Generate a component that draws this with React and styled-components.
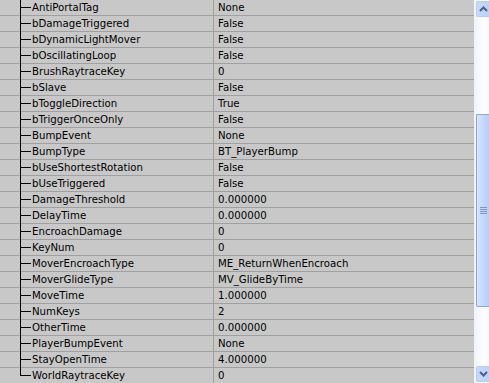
import React from 'react'
import styled, { createGlobalStyle } from 'styled-components'

const GlobalStyle = createGlobalStyle`
  html, body {
    margin: 0;
    padding: 0;
    overflow: hidden;
    background: #c8c8c8;
  }
`

const props = [
  ['AntiPortalTag', 'None'],
  ['bDamageTriggered', 'False'],
  ['bDynamicLightMover', 'False'],
  ['bOscillatingLoop', 'False'],
  ['BrushRaytraceKey', '0'],
  ['bSlave', 'False'],
  ['bToggleDirection', 'True'],
  ['bTriggerOnceOnly', 'False'],
  ['BumpEvent', 'None'],
  ['BumpType', 'BT_PlayerBump'],
  ['bUseShortestRotation', 'False'],
  ['bUseTriggered', 'False'],
  ['DamageThreshold', '0.000000'],
  ['DelayTime', '0.000000'],
  ['EncroachDamage', '0'],
  ['KeyNum', '0'],
  ['MoverEncroachType', 'ME_ReturnWhenEncroach'],
  ['MoverGlideType', 'MV_GlideByTime'],
  ['MoveTime', '1.000000'],
  ['NumKeys', '2'],
  ['OtherTime', '0.000000'],
  ['PlayerBumpEvent', 'None'],
  ['StayOpenTime', '4.000000'],
  ['WorldRaytraceKey', '0'],
]

const Window = styled.div`
  display: flex;
  width: 489px;
  height: 383px;
  overflow: hidden;
  font-family: Tahoma, "DejaVu Sans", "Liberation Sans", sans-serif;
  font-size: 10.2px;
  color: #000;
`

const List = styled.div`
  flex: 1;
  display: flex;
  flex-direction: column;
  background: #c8c8c8;
`

const Row = styled.div`
  display: grid;
  grid-template-columns: 214px 1fr;
  height: 15px;
  border-bottom: 1px solid #a0a0a0;
  flex-shrink: 0;
`

const NameCell = styled.div`
  position: relative;
  padding-left: 32px;
  line-height: 15px;
  border-right: 1px solid #a0a0a0;
  white-space: nowrap;

  &::before {
    content: '';
    position: absolute;
    left: 20px;
    top: 0;
    bottom: ${p => (p.$last ? '8px' : '-1px')};
    width: 1px;
    background: #000;
  }

  &::after {
    content: '';
    position: absolute;
    left: 20px;
    top: 7px;
    width: 11px;
    height: 1px;
    background: #000;
  }
`

const ValueCell = styled.div`
  padding-left: 4px;
  line-height: 15px;
  white-space: nowrap;
`

const ScrollBar = styled.div`
  width: 14px;
  display: flex;
  flex-direction: column;
  background: linear-gradient(to right, #f0f4fd, #fdfdfe 60%, #f5f8fe);
  border-left: 1px solid #eef2fb;
`

const ArrowButton = styled.div`
  height: 14px;
  margin: ${p => (p.$down ? '0 0 1px 1px' : '1px 0 0 1px')};
  display: flex;
  align-items: center;
  justify-content: center;
  border: 1px solid #b6cbf6;
  border-right: none;
  border-radius: 2px 0 0 2px;
  background: linear-gradient(to right, #c7d9fc, #bcd1fa);
`

const Track = styled.div`
  flex: 1;
  display: flex;
  flex-direction: column;
`

const Gap = styled.div`
  height: ${p => p.$h}px;
  flex-shrink: 0;
`

const Thumb = styled.div`
  height: 191px;
  margin-left: 1px;
  display: flex;
  align-items: center;
  justify-content: center;
  border: 1px solid #8da6d8;
  border-right: none;
  border-radius: 2px 0 0 2px;
  background: linear-gradient(to right, #d7e5fe, #c5d8fc 50%, #b6cdf8);
`

const Arrow = ({ down }) => (
  <svg width="9" height="6" viewBox="0 0 9 6">
    <path
      d={down ? 'M1 1 L4.5 4.5 L8 1' : 'M1 5 L4.5 1.5 L8 5'}
      fill="none"
      stroke="#4d6185"
      strokeWidth="2"
    />
  </svg>
)

const Grip = () => (
  <svg width="7" height="8" viewBox="0 0 7 8">
    {[0, 2, 4, 6].map(y => (
      <rect key={y} x="0" y={y} width="7" height="1" fill="#7d94c4" />
    ))}
  </svg>
)

export default function App() {
  return (
    <Window>
      <GlobalStyle />
      <List>
        {props.map(([name, value], i) => (
          <Row key={name}>
            <NameCell $last={i === props.length - 1}>{name}</NameCell>
            <ValueCell>{value}</ValueCell>
          </Row>
        ))}
      </List>
      <ScrollBar>
        <ArrowButton>
          <Arrow />
        </ArrowButton>
        <Track>
          <Gap $h={97} />
          <Thumb>
            <Grip />
          </Thumb>
        </Track>
        <ArrowButton $down>
          <Arrow down />
        </ArrowButton>
      </ScrollBar>
    </Window>
  )
}
